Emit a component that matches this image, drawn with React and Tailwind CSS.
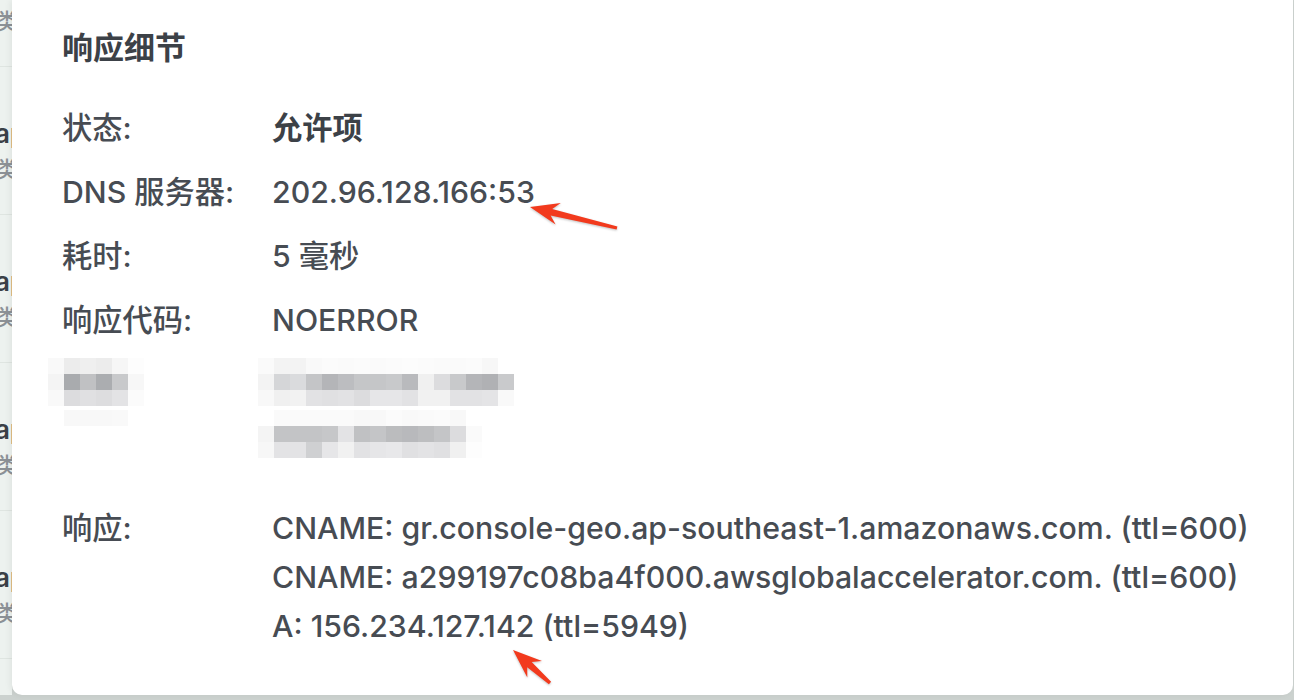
import React from "react";

const labelMosaic = [
  [
    ["#f9f9f9", "#ececec", "#efefef", "#ececec", "#f6f6f6", "#fdfdfd"],
    ["#f4f4f4", "#a9abae", "#c0c1c3", "#abadb0", "#c8c9cb", "#f7f7f7"],
    ["#f9f9f9", "#dcdcde", "#e0e0e2", "#dddddf", "#e3e3e5", "#fbfbfb"],
  ],
  [
    ["#ffffff", "#f8f8f8", "#f8f8f8", "#f8f8f8", "#f9f9f9", "#ffffff"],
  ],
];

const valueMosaic = [
  [
    ["#fafafa", "#f3f3f3", "#f3f3f3", "#f9f9f9", "#fbfbfb", "#fafafa", "#fbfbfb", "#fafafa", "#fbfbfb", "#fcfcfc", "#fbfbfb", "#fafafa", "#fafafa", "#fbfbfb", "#f7f7f7", "#ffffff"],
    ["#f3f3f3", "#d5d6d8", "#dadbdd", "#c4c5c7", "#b4b5b8", "#bcbdc0", "#c5c6c8", "#c5c6c8", "#c8c9cb", "#b9babd", "#f0f0f0", "#dcdcde", "#c8c9cb", "#b4b5b8", "#b0b1b4", "#c9cacc"],
    ["#f8f8f8", "#f0f0f0", "#f2f2f2", "#e2e2e4", "#e0e0e2", "#e2e2e4", "#dcdcde", "#e6e6e8", "#e6e6e8", "#e2e2e4", "#f1f1f1", "#f1f1f1", "#e2e2e4", "#e2e2e4", "#e4e4e6", "#f9f9f9"],
  ],
  [
    ["#ffffff", "#fafafa", "#fafafa", "#fafafa", "#fafafa", "#fafafa", "#f8f8f8", "#f8f8f8", "#fbfbfb", "#f9f9f9", "#fafafa", "#fbfbfb", "#f8f8f8", "#ffffff"],
    ["#f4f4f4", "#c3c4c6", "#c3c4c6", "#c3c4c6", "#c6c7c9", "#e3e3e5", "#c0c1c3", "#c4c5c7", "#bbbcbe", "#b8b9bc", "#bdbec0", "#c4c5c7", "#dcdcde", "#fafafa"],
    ["#f7f7f7", "#e3e3e5", "#e3e3e5", "#cfd0d2", "#e6e6e8", "#f1f1f1", "#e2e2e4", "#e6e6e8", "#e8e8ea", "#e0e0e2", "#e3e3e5", "#e0e0e2", "#f0f0f0", "#fdfdfd"],
  ],
];

const rows = [
  { label: "状态:", value: "允许项", bold: true },
  { label: "DNS 服务器:", value: "202.96.128.166:53" },
  { label: "耗时:", value: "5 毫秒" },
  { label: "响应代码:", value: "NOERROR" },
];

const answers = [
  "CNAME: gr.console-geo.ap-southeast-1.amazonaws.com. (ttl=600)",
  "CNAME: a299197c08ba4f000.awsglobalaccelerator.com. (ttl=600)",
  "A: 156.234.127.142 (ttl=5949)",
];

const Mosaic = ({ lines }) => (
  <div className="flex flex-col">
    {lines.map((line, i) => (
      <div key={i} className={i === 0 ? "flex flex-col" : "flex flex-col mt-[4px]"}>
        {line.map((row, j) => (
          <div key={j} className="flex">
            {row.map((c, k) => (
              <div key={k} className="w-[16px] h-[16px]" style={{ backgroundColor: c }} />
            ))}
          </div>
        ))}
      </div>
    ))}
  </div>
);

// skitch style red arrow, tip -> tail
const arrowPoints = (tx, ty, sx, sy) => {
  const dx = tx - sx;
  const dy = ty - sy;
  const len = Math.hypot(dx, dy);
  const ux = dx / len;
  const uy = dy / len;
  const nx = -uy;
  const ny = ux;
  const H = 26;
  const W = 11;
  const bx = tx - ux * H;
  const by = ty - uy * H;
  const pts = [
    [tx, ty],
    [bx - ux * 3 + nx * W, by - uy * 3 + ny * W],
    [bx + ux * 4 + nx * 3.4, by + uy * 4 + ny * 3.4],
    [sx + nx * 1.6, sy + ny * 1.6],
    [sx - nx * 1.6, sy - ny * 1.6],
    [bx + ux * 4 - nx * 3.4, by + uy * 4 - ny * 3.4],
    [bx - ux * 3 - nx * W, by - uy * 3 - ny * W],
  ];
  return pts.map((p) => p.map((v) => v.toFixed(1)).join(",")).join(" ");
};

const SideItem = () => (
  <div className="h-[148px] border-b border-[#dfe5e1] flex flex-col">
    <div className="mt-[52px] h-[30px] leading-[30px] text-[26px] font-semibold text-[#3b4046] whitespace-nowrap ml-[-5px]">
      ap
    </div>
    <div className="mt-[7px] h-[26px] leading-[26px] text-[22px] text-[#8c9196] whitespace-nowrap ml-[-4px]">
      类
    </div>
  </div>
);

export default function App() {
  return (
    <div
      className="relative w-[1294px] h-[700px] overflow-hidden bg-[#ccd2cf] text-[#474c53] font-medium"
      style={{ fontFamily: 'Inter, "Noto Sans CJK SC", sans-serif' }}
    >
      <div className="flex h-[695px]">
        <div className="w-[12px] h-full overflow-hidden bg-[#edf2ef] shrink-0">
          <div className="mt-[-81px]">
            <SideItem />
            <SideItem />
            <SideItem />
            <SideItem />
            <SideItem />
            <SideItem />
          </div>
        </div>
        <div className="w-[1281px] h-full bg-white rounded-br-[10px] rounded-bl-[10px] shadow-[-2px_0_6px_rgba(0,0,0,0.06)] shrink-0 pt-[28px] pl-[50px]">
          <h2 className="h-[40px] leading-[40px] text-[31px] font-bold text-[#3c4147]">
            响应细节
          </h2>
          <div className="mt-[29px] flex flex-col">
            {rows.map((r) => (
              <div key={r.label} className="flex items-center h-[64px] text-[30.25px]">
                <div className="w-[210px] shrink-0">{r.label}</div>
                <div className={r.bold ? "font-bold text-[#3c4147]" : ""}>{r.value}</div>
              </div>
            ))}
          </div>
          <div className="flex h-[151px] pt-[5px]">
            <div className="w-[210px] shrink-0 ml-[-14px] mr-[14px]">
              <Mosaic lines={labelMosaic} />
            </div>
            <div className="ml-[-14px]">
              <Mosaic lines={valueMosaic} />
            </div>
          </div>
          <div className="flex text-[30.25px]">
            <div className="w-[210px] shrink-0 h-[49px] leading-[49px]">响应:</div>
            <div className="flex flex-col">
              {answers.map((a) => (
                <div key={a} className="h-[49px] leading-[49px] whitespace-nowrap">
                  {a}
                </div>
              ))}
            </div>
          </div>
        </div>
      </div>
      <svg className="absolute inset-0 pointer-events-none drop-shadow-[0_1px_1px_rgba(0,0,0,0.25)]" width="1294" height="700">
        <polygon points={arrowPoints(530, 207, 617, 228)} fill="#f23a1d" />
        <polygon points={arrowPoints(513, 650, 550, 683)} fill="#f23a1d" />
      </svg>
    </div>
  );
}
